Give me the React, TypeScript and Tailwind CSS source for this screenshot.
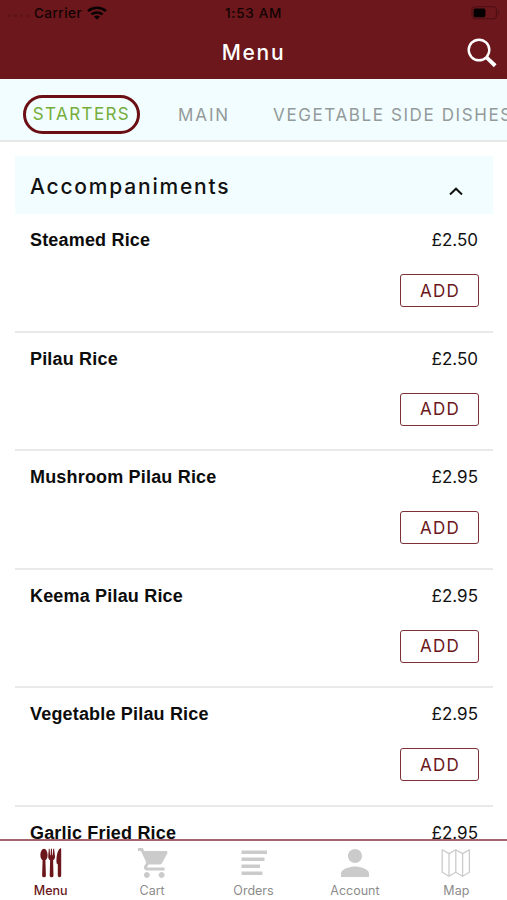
import type { ReactNode } from "react";
import clsx from "clsx";

type MenuItem = {
  name: string;
  price: string;
};

const items: MenuItem[] = [
  { name: "Steamed Rice", price: "£2.50" },
  { name: "Pilau Rice", price: "£2.50" },
  { name: "Mushroom Pilau Rice", price: "£2.95" },
  { name: "Keema Pilau Rice", price: "£2.95" },
  { name: "Vegetable Pilau Rice", price: "£2.95" },
  { name: "Garlic Fried Rice", price: "£2.95" },
];

function WifiIcon() {
  return (
    <svg width="20" height="14" viewBox="0 0 18 14" preserveAspectRatio="none" fill="none" stroke="#0b0203" className="ml-[5px]">
      <path d="M1 5.2a11.2 11.2 0 0 1 16 0" strokeWidth="2.5" />
      <path d="M4 8.5a7.2 7.2 0 0 1 10 0" strokeWidth="2.4" />
      <path d="M9 13.6 6.2 10.8a4 4 0 0 1 5.6 0z" fill="#0b0203" stroke="none" />
    </svg>
  );
}

function BatteryIcon() {
  return (
    <svg width="30" height="14" viewBox="0 0 30 14" fill="none">
      <rect x="2" y="0.8" width="24.5" height="12" rx="3.2" stroke="#4c1014" strokeWidth="1.1" />
      <rect x="3.6" y="2.4" width="11.8" height="8.8" rx="1.6" fill="#050102" />
      <path d="M28 4.8c1.3.4 1.3 3.6 0 4z" fill="#4c1014" />
    </svg>
  );
}

function SearchIcon() {
  return (
    <svg width="30" height="30" viewBox="0 0 30 30" fill="none" stroke="#fff">
      <circle cx="12" cy="12" r="10.3" strokeWidth="2.4" />
      <path d="M19.2 19.2l2 2" strokeWidth="2.6" />
      <path d="M21 20.8l5.800 5.600" strokeWidth="3.9" strokeLinecap="square" />
    </svg>
  );
}

function CutleryIcon() {
  return (
    <svg width="22" height="30" viewBox="0 0 22 30" fill="#6b171b">
      <path d="M4 .8c2.100 0 3.600 3.300 3.600 6.400 0 2.500-.9 4.100-2.200 5l.5 15.200a1.900 1.900 0 0 1-3.800 0l.5-15.200C1.300 11.300.4 9.700.4 7.200.4 4.100 1.900.8 4 .8z" />
      <path d="M8.800.8h.8l.5 6.400h.5l.3-6.400h1l.3 6.400h.5l.5-6.400h.9l.9 7.600c.1 2-.9 3.200-1.900 3.800l.4 15.200a1.900 1.900 0 0 1-3.800 0l.4-15.200C9.100 11.600 8.100 10.400 8.200 8.400z" />
      <path d="M21.200 1.200v26.300a1.700 1.700 0 0 1-3.400 0V16.500l-1.200-1.300c-.5-6 .7-13.200 3.500-14.800.7-.4 1.100 0 1.100.8z" />
    </svg>
  );
}

function CartIcon() {
  return (
    <svg width="31" height="30" viewBox="1 2 21 20" preserveAspectRatio="none" fill="#cbcbcb" className="ml-[2px]">
      <path d="M7 18c-1.100 0-1.990.9-1.990 2S5.900 22 7 22s2-.9 2-2-.9-2-2-2zM1 2v2h2l3.600 7.590-1.350 2.450c-.16.280-.25.610-.25.960 0 1.100.9 2 2 2h12v-2H7.420c-.14 0-.25-.11-.25-.25l.03-.12.900-1.630h7.450c.75 0 1.410-.41 1.750-1.030l3.580-6.490A1.003 1.003 0 0 0 20 4H5.210l-.94-2H1zm16 16c-1.100 0-1.990.9-1.990 2s.89 2 1.990 2 2-.9 2-2-.9-2-2-2z" />
    </svg>
  );
}

function OrdersIcon() {
  return (
    <svg width="26" height="30" viewBox="0 0 26 30" fill="#cbcbcb">
      <rect x="0.500" y="2.500" width="25.500" height="3.500" />
      <rect x="0.500" y="9.500" width="23" height="3.500" />
      <rect x="0.500" y="16.500" width="18.500" height="3.500" />
      <rect x="0.500" y="23.500" width="21" height="3.500" />
    </svg>
  );
}

function AccountIcon() {
  return (
    <svg width="28" height="30" viewBox="4 3.500 16 17" fill="#cbcbcb">
      <path d="M12 12c2.210 0 4-1.790 4-4s-1.790-4-4-4-4 1.790-4 4 1.790 4 4 4zm0 2c-2.670 0-8 1.340-8 4v2h16v-2c0-2.660-5.330-4-8-4z" />
    </svg>
  );
}

function MapIcon() {
  return (
    <svg width="30" height="30" viewBox="0 0 30 30" fill="none" stroke="#cbcbcb" strokeWidth="1.300" strokeLinejoin="round">
      <path d="M1.200 1.800 8 5.600l6.800-3.800 6.800 3.800 6.800-3.800v22.500l-6.800 3.900-6.800-3.900L8 28.200l-6.800-3.900z" />
      <path d="M8 5.600v22.600M14.800 1.800v22.500M21.600 5.600v22.600" />
    </svg>
  );
}

function NavItem({ label, active, children }: { label: string; active?: boolean; children: ReactNode }) {
  return (
    <button className="flex flex-1 flex-col items-center pt-[7px]">
      <span className="flex h-[30px] items-center">{children}</span>
      <span
        className={clsx(
          "mt-[5px] text-[12.500px] leading-4",
          active ? "font-medium text-[#6b171b]" : "text-[#8c8c8c]"
        )}
      >
        {label}
      </span>
    </button>
  );
}

function MenuRow({ item }: { item: MenuItem }) {
  return (
    <li className="flex h-[118.500px] shrink-0 justify-between border-b-2 border-[#e9e9e9] pr-[14px] pl-[15px] pt-[14px]">
      <span className="font-['Liberation_Sans',sans-serif] text-[18px] leading-6 font-bold tracking-[0.180px] text-[#0c0c0c]">
        {item.name}
      </span>
      <div className="flex flex-col items-end">
        <span className="mr-px text-[17px] leading-6 text-[#111]">{item.price}</span>
        <button className="mt-[22px] flex h-[33px] w-[79px] items-center justify-center rounded-[3px] border-[1.500px] border-[#7d3036] pt-[2px] pl-px text-[17px] tracking-[1.200px] text-[#6b171b]">
          ADD
        </button>
      </div>
    </li>
  );
}

export default function App() {
  return (
    <div className="flex h-[900px] w-[507px] flex-col overflow-hidden bg-white font-['Inter',sans-serif]">
      <header className="h-[79px] shrink-0 bg-[#6b171b]">
        <div className="grid h-[26px] grid-cols-3 items-center text-[13.500px] text-[#120304]">
          <div className="flex items-center pl-2">
            <span className="flex w-[26px] gap-[3px] pt-1">
              <i className="size-[3px] rounded-full bg-[#5d1418]" />
              <i className="size-[3px] rounded-full bg-[#5d1418]" />
              <i className="size-[3px] rounded-full bg-[#5d1418]" />
              <i className="size-[3px] rounded-full bg-[#5d1418]" />
            </span>
            <span className="font-medium tracking-[0.450px]">Carrier</span>
            <WifiIcon />
          </div>
          <span className="text-center font-medium tracking-[0.700px]">1:53 AM</span>
          <div className="flex justify-end pr-[7px]">
            <BatteryIcon />
          </div>
        </div>
        <div className="grid h-[53px] grid-cols-[1fr_auto_1fr] items-center">
          <h1 className="col-start-2 text-[21px] font-medium tracking-[1.700px] text-white">Menu</h1>
          <div className="flex justify-end pr-[10px]">
            <SearchIcon />
          </div>
        </div>
      </header>

      <nav className="flex h-[63px] shrink-0 items-center overflow-hidden border-b-2 border-[#e7e9e8] bg-[#f1fdfe] pt-[9px] pl-[23px] text-[17px] whitespace-nowrap text-[#949a9a]">
        <button className="flex h-[39px] w-[117px] shrink-0 items-center justify-center rounded-full border-[3.500px] border-[#6b0f14] pt-[2px] tracking-[1.400px] text-[#75ad3c]">
          STARTERS
        </button>
        <button className="ml-[38px] pt-[3px] tracking-[1.900px]">MAIN</button>
        <button className="ml-[43px] pt-[3px] tracking-[1.600px]">VEGETABLE SIDE DISHES</button>
      </nav>

      <main className="flex min-h-0 flex-1 flex-col overflow-hidden pt-[14px] pr-[14px] pl-[15px]">
        <div className="flex h-[58px] shrink-0 items-center justify-between bg-[#f1fdfe] pr-[30px] pl-[15px]">
          <h2 className="pt-[3px] text-[21px] font-medium tracking-[1.800px] text-[#111]">Accompaniments</h2>
          <svg width="14" height="9" viewBox="0 0 14 9" fill="none" stroke="#111" strokeWidth="2" className="mt-[12px]">
            <path d="M1 7.500 7 1.700l6 5.800" />
          </svg>
        </div>
        <ul className="flex flex-col">
          {items.map((item) => (
            <MenuRow key={item.name} item={item} />
          ))}
        </ul>
      </main>

      <footer className="flex h-[61px] shrink-0 border-t-2 border-[#a4666c] bg-white">
        <NavItem label="Menu" active>
          <CutleryIcon />
        </NavItem>
        <NavItem label="Cart">
          <CartIcon />
        </NavItem>
        <NavItem label="Orders">
          <OrdersIcon />
        </NavItem>
        <NavItem label="Account">
          <AccountIcon />
        </NavItem>
        <NavItem label="Map">
          <MapIcon />
        </NavItem>
      </footer>
    </div>
  );
}
